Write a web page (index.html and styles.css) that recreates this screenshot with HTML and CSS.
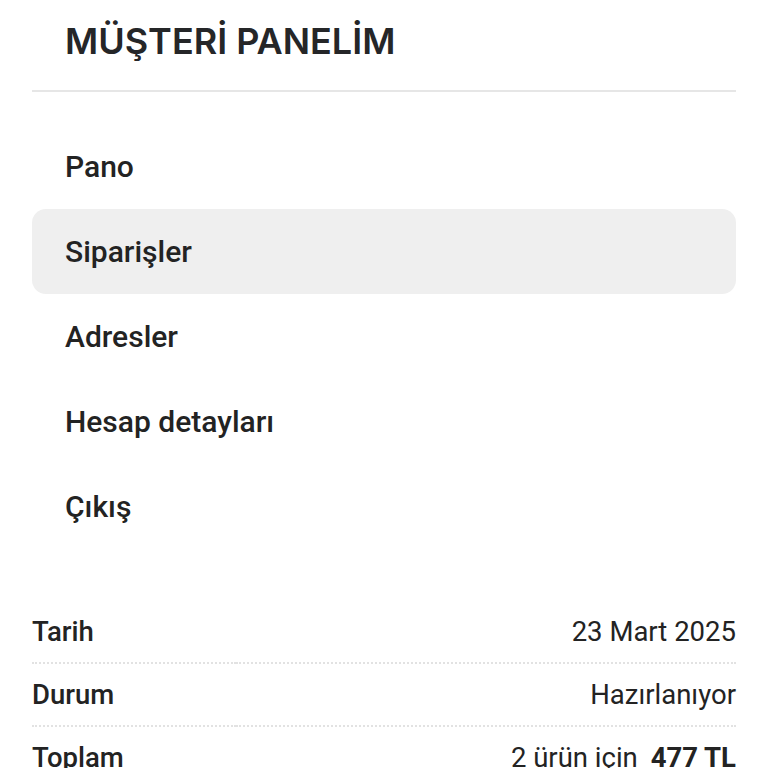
FILE: index.html
```html
<!DOCTYPE html>
<html lang="tr">
<head>
	<meta charset="utf-8">
	<title>Müşteri Panelim</title>
	<link rel="stylesheet" href="styles.css">
</head>
<body>
	<div class="account">
		<h1 class="account-title">MÜŞTERİ PANELİM</h1>

		<ul class="account-nav">
			<li><a href="#">Pano</a></li>
			<li class="active"><a href="#">Siparişler</a></li>
			<li><a href="#">Adresler</a></li>
			<li><a href="#">Hesap detayları</a></li>
			<li><a href="#">Çıkış</a></li>
		</ul>

		<!-- Order summary -->
		<table class="order-summary">
			<tr>
				<th>Tarih</th>
				<td>23 Mart 2025</td>
			</tr>
			<tr>
				<th>Durum</th>
				<td>Hazırlanıyor</td>
			</tr>
			<tr>
				<th>Toplam</th>
				<td>2 ürün için <strong>477 TL</strong></td>
			</tr>
		</table>
	</div>
</body>
</html>
```

FILE: styles.css
```css
body { margin: 0; background: #ffffff; font-family: Roboto, "Noto Sans", sans-serif; color: #232323; -webkit-font-smoothing: antialiased; }
.account { padding: 0 32px; }

.account-title {
    margin: 0;
    padding: 19px 0 27px 33px;
    font-family: Inter, "Noto Sans", sans-serif;
    font-size: 36px;
    line-height: 44px;
    font-weight: 600;
    color: #252628;
    border-bottom: 2px solid #e6e6e6;
}

.account-nav { list-style: none; margin: 0; padding: 32px 0 0 0; }
.account-nav li { border-radius: 14px; }
.account-nav li.active { background: #efefef; }
.account-nav a {
    display: block;
    padding: 0 33px;
    height: 85px;
    line-height: 85px;
    font-size: 30px;
    font-weight: 500;
    color: #232323;
    text-decoration: none;
}

.order-summary { width: 100%; border-collapse: collapse; margin-top: 52px; font-size: 27.5px; }
.order-summary th, .order-summary td { height: 61px; padding: 0; border-bottom: 2px dotted #e2e2e2; }
.order-summary th { text-align: left; font-weight: 500; }
.order-summary td { text-align: right; font-weight: 400; }
.order-summary strong { font-weight: 700; margin-left: 6px; }
```
